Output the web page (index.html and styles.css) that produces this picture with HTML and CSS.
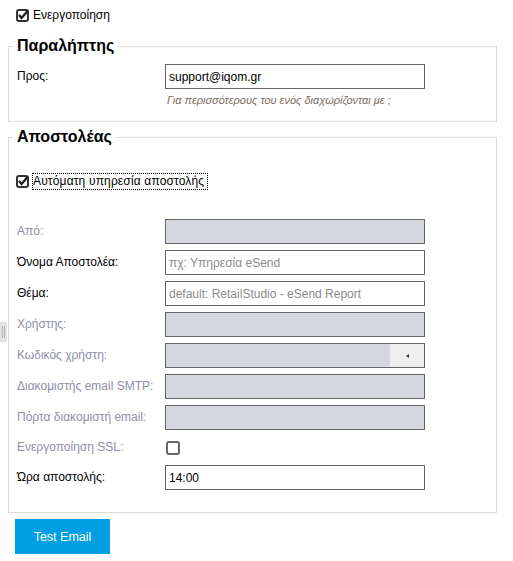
FILE: index.html
```html
<!DOCTYPE html>
<html>
<head>
<meta charset="utf-8">
<link rel="stylesheet" href="styles.css">
</head>
<body>
<div class="page">
  <div class="check-row top-check">
    <svg class="cb" width="13" height="13" viewBox="0 0 13 13"><rect x="1" y="1" width="11" height="11" rx="2" fill="#fff" stroke="#333" stroke-width="2"/><path d="M3 6 L5.6 9 L12 1.5" fill="none" stroke="#222" stroke-width="2.4"/></svg>
    <span class="cb-label">Ενεργοποίηση</span>
  </div>

  <fieldset class="box box-recipient">
    <legend>Παραλήπτης</legend>
    <div class="form-grid">
      <label class="lbl">Προς:</label>
      <div class="field"><input class="inp" type="text" value="support@iqom.gr"></div>
    </div>
    <div class="hint">Για περισσότερους του ενός διαχωρίζονται με ;</div>
  </fieldset>

  <fieldset class="box box-sender">
    <legend>Αποστολέας</legend>
    <div class="check-row auto-check">
      <svg class="cb" width="13" height="13" viewBox="0 0 13 13"><rect x="1" y="1" width="11" height="11" rx="2" fill="#fff" stroke="#333" stroke-width="2"/><path d="M3 6 L5.6 9 L12 1.5" fill="none" stroke="#222" stroke-width="2.4"/></svg>
      <span class="cb-label focused">Αυτόματη υπηρεσία αποστολής</span>
    </div>
    <div class="form-grid sender-grid">
      <label class="lbl dis">Από:</label>
      <div class="field"><input class="inp disabled" type="text" disabled></div>

      <label class="lbl">Όνομα Αποστολέα:</label>
      <div class="field"><input class="inp" type="text" placeholder="πχ: Υπηρεσία eSend"></div>

      <label class="lbl">Θέμα:</label>
      <div class="field"><input class="inp" type="text" placeholder="default: RetailStudio - eSend Report"></div>

      <label class="lbl dis">Χρήστης:</label>
      <div class="field"><input class="inp disabled" type="text" disabled></div>

      <label class="lbl dis">Κωδικός χρήστη:</label>
      <div class="field pw"><div class="pw-fill"></div><div class="pw-btn"><span class="tri"></span></div></div>

      <label class="lbl dis">Διακομιστής email SMTP:</label>
      <div class="field"><input class="inp disabled" type="text" disabled></div>

      <label class="lbl dis">Πόρτα διακομιστή email:</label>
      <div class="field"><input class="inp disabled" type="text" disabled></div>

      <label class="lbl dis short">Ενεργοποίηση SSL:</label>
      <div class="field short"><span class="empty-cb"></span></div>

      <label class="lbl">Ώρα αποστολής:</label>
      <div class="field"><input class="inp" type="text" value="14:00"></div>
    </div>
  </fieldset>

  <button class="btn" type="button">Test Email</button>
</div>
<div class="handle"><span></span><span></span></div>
</body>
</html>
```
FILE: styles.css
```css
html, body {
  margin: 0;
  padding: 0;
  background: #fff;
}
body {
  font-family: "Liberation Sans", Arial, sans-serif;
  font-size: 12px;
  color: #000;
  position: relative;
  width: 513px;
  height: 561px;
  overflow: hidden;
}
.page {
  padding: 9px 0 0 8px;
}
.check-row {
  display: flex;
  align-items: center;
  height: 13px;
}
.top-check {
  padding-left: 8px;
}
.cb {
  display: block;
  flex: none;
}
.cb-label {
  margin-left: 4px;
  line-height: 15px;
}
.focused {
  outline: 1px dotted #000;
  margin-left: 4px;
  padding: 0 3px 0 0;
  letter-spacing: 0.15px;
}
.box {
  box-sizing: border-box;
  width: 489px;
  border: 1px solid #dcdcdc;
  margin: 0;
  padding: 0 8px;
  min-width: 0;
}
.box legend {
  font-size: 16px;
  line-height: 20px;
  font-weight: bold;
  padding: 0 4px;
  margin-left: -4px;
  color: #000;
}
.box-recipient {
  margin-top: 14px;
  padding-top: 8px;
  padding-bottom: 14px;
}
.box-sender {
  margin-top: 5px;
  padding-top: 0;
  padding-bottom: 22px;
}
.form-grid {
  display: grid;
  grid-template-columns: 148px 260px;
  row-gap: 6px;
  align-items: center;
}
.auto-check {
  margin-top: 28px;
  padding-left: 0;
  margin-left: -1px;
}
.sender-grid {
  margin-top: 31px;
}
.lbl {
  line-height: 15px;
  color: #000;
}
.lbl.dis {
  color: #8f8ea8;
}
.field {
  height: 25px;
  display: flex;
}
.field.short {
  height: 23px;
  align-items: center;
}
.inp {
  box-sizing: border-box;
  width: 260px;
  height: 25px;
  border: 1px solid #666;
  background: #fff;
  margin: 0;
  padding: 0 3px;
  font-family: "Liberation Sans", Arial, sans-serif;
  font-size: 12px;
  color: #000;
  outline: none;
}
.inp::placeholder {
  color: #8a8a8a;
}
.inp.disabled {
  background: #d4d7de;
}
.pw {
  box-sizing: border-box;
  width: 260px;
  border: 1px solid #666;
  background: #d4d7de;
}
.pw-fill {
  flex: 1;
}
.pw-btn {
  width: 34px;
  height: 23px;
  background: #eeeeee;
  display: flex;
  align-items: center;
  justify-content: center;
}
.tri {
  width: 0;
  height: 0;
  border-top: 2.5px solid transparent;
  border-bottom: 2.5px solid transparent;
  border-right: 3px solid #333;
}
.empty-cb {
  box-sizing: border-box;
  display: block;
  width: 14px;
  height: 14px;
  margin-left: 1px;
  border: 2px solid #666;
  border-radius: 3px;
  background: #fff;
}
.hint {
  margin: 4px 0 0 150px;
  font-size: 11px;
  line-height: 14px;
  font-style: italic;
  color: #7d6b5c;
}
.btn {
  display: block;
  margin: 6px 0 0 7px;
  width: 95px;
  height: 35px;
  border: none;
  background: #009fe3;
  color: #fff;
  font-family: "Liberation Sans", Arial, sans-serif;
  font-size: 12.5px;
  padding: 0;
}
.handle {
  position: absolute;
  left: 0;
  top: 322px;
  width: 7px;
  height: 20px;
  background: #e2e2e2;
  display: flex;
  justify-content: center;
  align-items: center;
  gap: 1px;
}
.handle span {
  width: 1px;
  height: 12px;
  background: #b5b5b5;
}
```
